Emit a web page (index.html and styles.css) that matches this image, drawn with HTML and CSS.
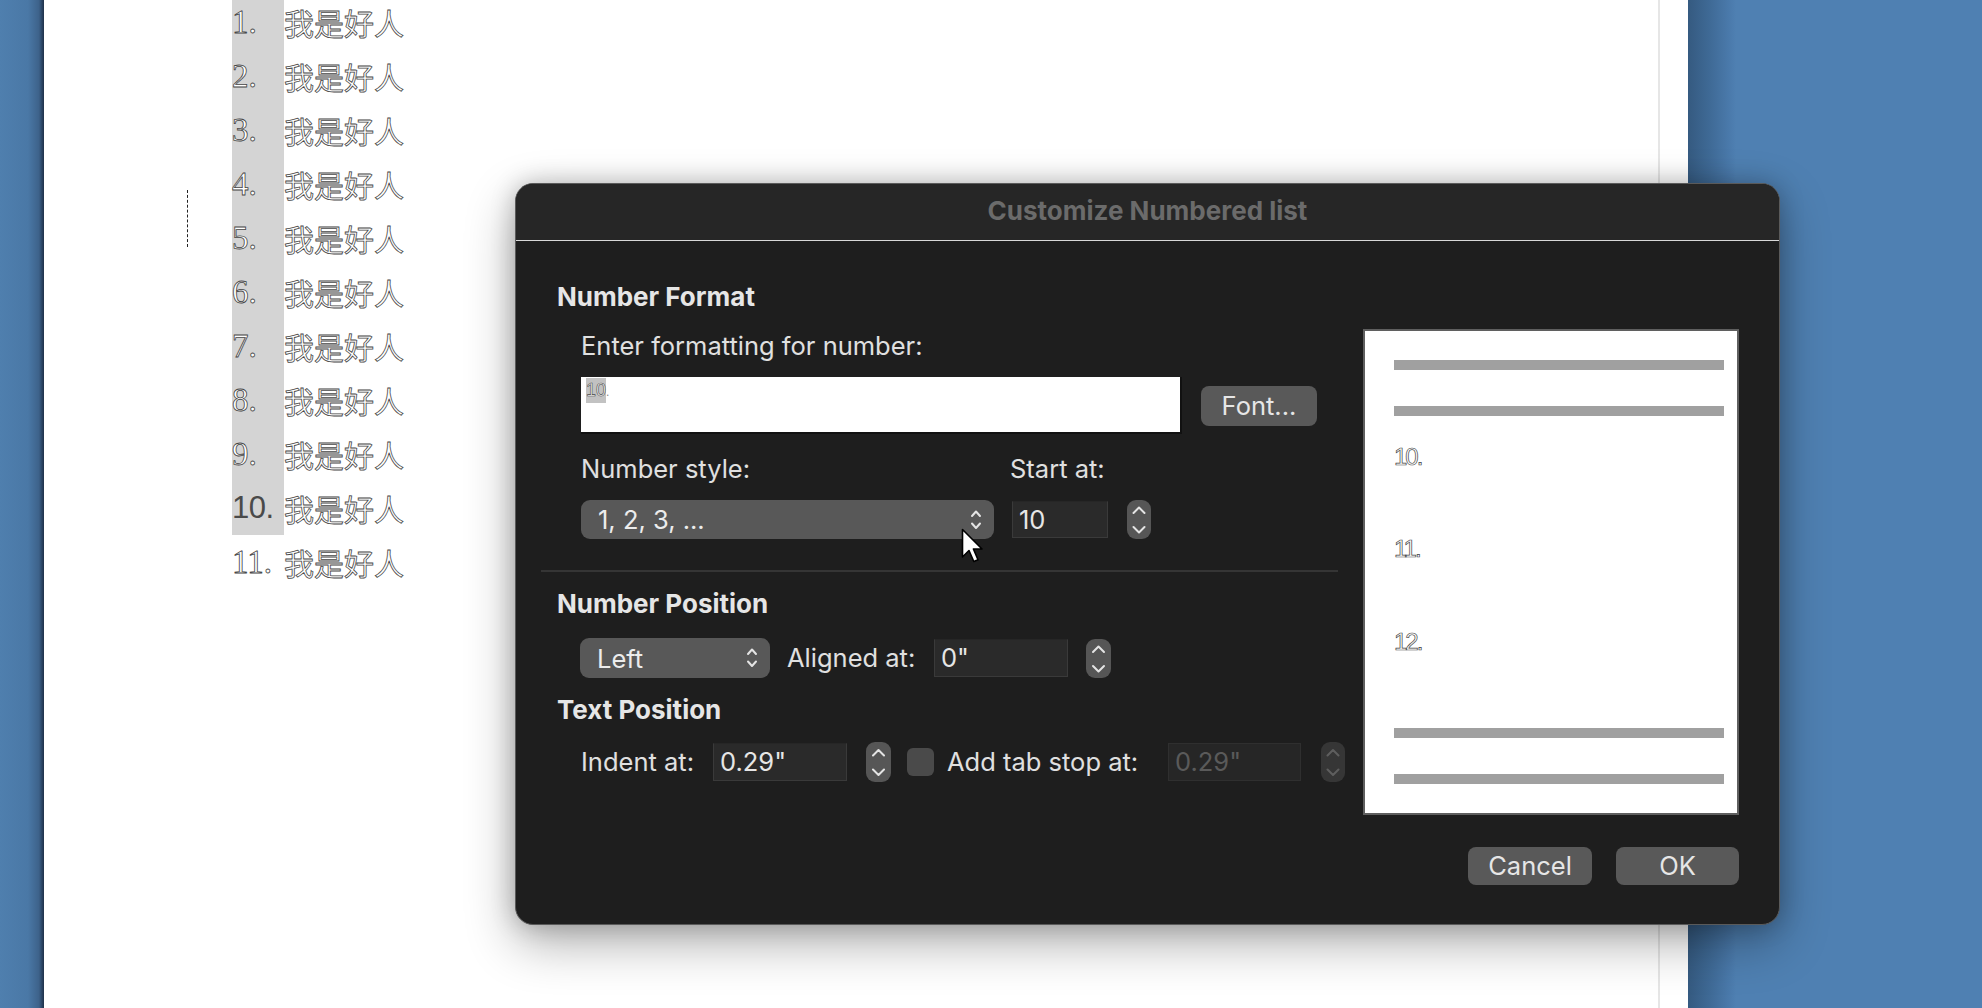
FILE: index.html
```html
<!DOCTYPE html>
<html lang="zh">
<head>
<meta charset="utf-8">
<title>Customize Numbered list</title>
<link rel="stylesheet" href="styles.css">
</head>
<body>
<div class="desktop">
  <div class="dock-edge"></div>
  <main class="page">
    <div class="page-body">
      <ol class="doc-list">
        <li class="doc-item"><span class="num hl">1.</span><span class="txt">我是好人</span></li>
        <li class="doc-item"><span class="num hl">2.</span><span class="txt">我是好人</span></li>
        <li class="doc-item"><span class="num hl">3.</span><span class="txt">我是好人</span></li>
        <li class="doc-item"><span class="num hl">4.</span><span class="txt">我是好人</span></li>
        <li class="doc-item"><span class="num hl">5.</span><span class="txt">我是好人</span></li>
        <li class="doc-item"><span class="num hl">6.</span><span class="txt">我是好人</span></li>
        <li class="doc-item"><span class="num hl">7.</span><span class="txt">我是好人</span></li>
        <li class="doc-item"><span class="num hl">8.</span><span class="txt">我是好人</span></li>
        <li class="doc-item"><span class="num hl">9.</span><span class="txt">我是好人</span></li>
        <li class="doc-item"><span class="num hl sel">10.</span><span class="txt">我是好人</span></li>
        <li class="doc-item"><span class="num">11.</span><span class="txt">我是好人</span></li>
      </ol>
      <span class="ibeam"></span>
    </div>
    <div class="page-margin"></div>
  </main>
  <div class="desk-right"></div>
</div>

<section class="dialog">
  <header class="dlg-title">Customize Numbered list</header>
  <div class="dlg-body">
    <div class="dlg-main">
      <h2 class="sec-h">Number Format</h2>
      <div class="lbl ind first-lbl">Enter formatting for number:</div>
      <div class="row fmt-row">
        <div class="fmt-field"><span class="fmt-sel">10</span><span class="fmt-dot">.</span></div>
        <div class="btn font-btn">Font...</div>
      </div>
      <div class="row lbl-row">
        <span class="lbl style-lbl">Number style:</span>
        <span class="lbl">Start at:</span>
      </div>
      <div class="row ctl-row">
        <div class="popup style-pop"><span>1, 2, 3, ...</span>
          <svg class="updown" width="14" height="24" viewBox="0 0 14 24"><path d="M3 8 L7 3.5 L11 8 M3 15.5 L7 20 L11 15.5"/></svg>
        </div>
        <div class="field start-field">10</div>
        <div class="stepper st-a">
          <svg width="24" height="39" viewBox="0 0 24 39"><path d="M6.5 13 L12 7.5 L17.5 13 M6.5 27 L12 32.5 L17.5 27"/></svg>
        </div>
      </div>
      <div class="sep"></div>
      <h2 class="sec-h sec-2">Number Position</h2>
      <div class="row pos-row">
        <div class="popup left-pop"><span>Left</span>
          <svg class="updown" width="14" height="24" viewBox="0 0 14 24"><path d="M3 8 L7 3.5 L11 8 M3 15.5 L7 20 L11 15.5"/></svg>
        </div>
        <span class="lbl aligned-lbl">Aligned at:</span>
        <div class="field num-field">0"</div>
        <div class="stepper st-b">
          <svg width="25" height="39" viewBox="0 0 25 39"><path d="M7 13 L12.5 7.5 L18 13 M7 27 L12.5 32.5 L18 27"/></svg>
        </div>
      </div>
      <h2 class="sec-h sec-3">Text Position</h2>
      <div class="row indent-row">
        <span class="lbl indent-lbl">Indent at:</span>
        <div class="field num-field">0.29"</div>
        <div class="stepper st-c">
          <svg width="25" height="40" viewBox="0 0 25 40"><path d="M7 13.5 L12.5 8 L18 13.5 M7 27.5 L12.5 33 L18 27.5"/></svg>
        </div>
        <span class="checkbox"></span>
        <span class="lbl tab-lbl">Add tab stop at:</span>
        <div class="field num-field off">0.29"</div>
        <div class="stepper st-d off">
          <svg width="24" height="40" viewBox="0 0 24 40"><path d="M6.5 13.5 L12 8 L17.5 13.5 M6.5 27.5 L12 33 L17.5 27.5"/></svg>
        </div>
      </div>
    </div>
    <div class="dlg-side">
      <div class="preview">
        <div class="pbar"></div>
        <div class="pbar pbar-2"></div>
        <div class="pnum pn-1">10.</div>
        <div class="pnum pn-2">11.</div>
        <div class="pnum pn-3">12.</div>
        <div class="pbar pbar-3"></div>
        <div class="pbar pbar-2"></div>
      </div>
      <div class="btn-row">
        <div class="btn push cancel">Cancel</div>
        <div class="btn push ok">OK</div>
      </div>
    </div>
  </div>
</section>

<svg class="pointer" width="26" height="38" viewBox="0 0 26 38">
  <path d="M1.5 1.5 L1.5 29 L8 22.5 L12.8 33.5 L17 31.7 L12.4 21 L21 21 Z" fill="#fff" stroke="#000" stroke-width="1.6" stroke-linejoin="round"/>
</svg>
</body>
</html>
```

FILE: styles.css
```css
html, body {
  margin: 0;
  padding: 0;
}
body {
  width: 1982px;
  height: 1008px;
  overflow: hidden;
  position: relative;
  background: #4f80b2;
  font-family: Inter, "Noto Sans", sans-serif;
}

/* ---------- desktop / document ---------- */
.desktop {
  display: flex;
  height: 1008px;
}
.dock-edge {
  flex: 0 0 44px;
  background: linear-gradient(to right, #4f7fae 0, #4a78a6 28px, #3d628a 39px, #2a4463 42px, #1f3149 44px);
}
.page {
  flex: 0 0 1644px;
  display: flex;
  background: #fff;
}
.page-body {
  flex: 0 0 1614px;
  border-right: 2px solid #e6e6e6;
  position: relative;
  overflow: hidden;
}
.page-margin {
  flex: 1;
}
.desk-right {
  flex: 1;
  background: linear-gradient(to right, #355a80 0, #3f6a96 22px, #4c7cae 44px, #4f80b2 48px);
}

.doc-list {
  list-style: none;
  margin: -5px 0 0 188px;
  padding: 0;
}
.doc-item {
  display: flex;
  height: 54px;
  line-height: 54px;
  font-size: 30px;
}
.num {
  flex: 0 0 52px;
  font-family: "Liberation Serif", serif;
  font-size: 33px;
  color: #fff;
  -webkit-text-stroke: 0.8px #444;
}
.num.hl {
  background: #d4d4d4;
}
.num.sel {
  color: #4a4a4a;
  -webkit-text-stroke: 0;
  font-family: "Liberation Sans", sans-serif;
  font-size: 31px;
  letter-spacing: -0.5px;
}
.txt {
  font-family: "Noto Sans CJK SC", sans-serif;
  font-weight: 400;
  color: #fff;
  -webkit-text-stroke: 0.8px #474747;
}
.ibeam {
  position: absolute;
  left: 143px;
  top: 190px;
  height: 57px;
  border-left: 1px dashed #222;
}

/* ---------- dialog ---------- */
.dialog {
  position: absolute;
  left: 515px;
  top: 183px;
  width: 1265px;
  height: 742px;
  box-sizing: border-box;
  border: 1px solid #5a5a5a;
  border-radius: 18px;
  background: #1e1e1e;
  overflow: hidden;
  box-shadow: 0 18px 50px rgba(0, 0, 0, 0.32), 0 0 24px rgba(0, 0, 0, 0.22);
  color: #e2e2e2;
}
.dlg-title {
  height: 56px;
  background: #262626;
  border-bottom: 1px solid #d9d9d9;
  text-align: center;
  line-height: 54px;
  font-size: 26px;
  font-weight: 700;
  color: #6b6b6b;
}
.dlg-body {
  display: flex;
}
.dlg-main {
  flex: 0 0 806px;
  padding: 41px 0 0 41px;
}
.dlg-side {
  flex: 0 0 376px;
  padding: 88px 40px 0 0;
}

.sec-h {
  margin: 0;
  font-size: 26px;
  line-height: 30px;
  font-weight: 700;
  color: #e6e6e6;
}
.lbl {
  font-size: 25.5px;
  line-height: 30px;
  color: #e0e0e0;
  white-space: nowrap;
}
.ind {
  margin-left: 24px;
}
.first-lbl {
  margin-top: 19px;
}
.row {
  display: flex;
  align-items: center;
}
.fmt-row {
  margin: 16px 0 0 24px;
}
.fmt-field {
  flex: 0 0 601px;
  height: 57px;
  box-sizing: border-box;
  background: #fff;
  border-right: 2px solid #111;
  border-bottom: 2px solid #111;
  padding: 1px 0 0 5px;
  font-family: "Liberation Sans", sans-serif;
  font-size: 18px;
  line-height: 25px;
}
.fmt-sel {
  display: inline-block;
  background: #c2c2c2;
  color: #fff;
  -webkit-text-stroke: 0.6px #444;
}
.fmt-dot {
  color: #888;
  font-size: 12px;
}
.btn {
  box-sizing: border-box;
  background: #595959;
  border-radius: 8px;
  color: #e6e6e6;
  font-size: 25.5px;
  text-align: center;
}
.font-btn {
  margin-left: 19px;
  width: 116px;
  height: 40px;
  line-height: 40px;
}
.lbl-row {
  margin: 20px 0 0 24px;
}
.style-lbl {
  flex: 0 0 429px;
}
.ctl-row {
  margin: 16px 0 0 24px;
}
.popup {
  box-sizing: border-box;
  display: flex;
  align-items: center;
  justify-content: space-between;
  background: #585858;
  border-radius: 9px;
  padding: 0 11px 0 17px;
  font-size: 25.5px;
  color: #ececec;
}
.updown path,
.stepper path {
  fill: none;
  stroke: #e4e4e4;
  stroke-width: 2;
  stroke-linecap: round;
  stroke-linejoin: round;
}
.style-pop {
  flex: 0 0 413px;
  height: 39px;
}
.field {
  box-sizing: border-box;
  height: 38px;
  background: #2a2a2a;
  border: 1px solid #3a3a3a;
  border-top-color: #262626;
  padding-left: 6px;
  font-size: 25.5px;
  line-height: 36px;
  color: #e6e6e6;
}
.start-field {
  flex: 0 0 96px;
  height: 37px;
  line-height: 35px;
  margin-left: 18px;
}
.stepper {
  box-sizing: border-box;
  background: #565656;
  border-radius: 9px;
  display: flex;
}
.st-a {
  margin-left: 19px;
  flex: 0 0 24px;
  height: 39px;
}
.sep {
  margin: 31px 0 0 -16px;
  width: 797px;
  height: 2px;
  background: #353535;
}
.sec-2 {
  margin-top: 17px;
}
.pos-row {
  margin: 19px 0 0 23px;
}
.left-pop {
  flex: 0 0 190px;
  height: 40px;
}
.aligned-lbl {
  flex: 0 0 147px;
  margin-left: 17px;
}
.num-field {
  flex: 0 0 134px;
}
.st-b {
  margin-left: 18px;
  flex: 0 0 25px;
  height: 39px;
}
.sec-3 {
  margin-top: 17px;
}
.indent-row {
  margin: 17px 0 0 24px;
  height: 40px;
}
.indent-lbl {
  flex: 0 0 132px;
}
.st-c {
  margin-left: 19px;
  flex: 0 0 25px;
  height: 40px;
}
.checkbox {
  margin-left: 16px;
  flex: 0 0 27px;
  height: 28px;
  border-radius: 6px;
  background: #4a4a4a;
}
.tab-lbl {
  flex: 0 0 221px;
  margin-left: 13px;
}
.num-field.off {
  flex: 0 0 133px;
  color: #5a5a5a;
  background: #262626;
  border-color: #2f2f2f;
}
.st-d {
  margin-left: 20px;
  flex: 0 0 24px;
  height: 40px;
}
.stepper.off {
  background: #363636;
}
.stepper.off path {
  stroke: #5e5e5e;
}

/* ---------- preview ---------- */
.preview {
  box-sizing: border-box;
  width: 376px;
  height: 486px;
  background: #fff;
  border: 2px solid #5f5f5f;
  padding: 29px 13px 0 29px;
}
.pbar {
  height: 10px;
  background: #a0a0a0;
}
.pbar-2 {
  margin-top: 36px;
}
.pbar-3 {
  margin-top: 72px;
}
.pnum {
  font-family: "Liberation Sans", sans-serif;
  font-size: 24px;
  line-height: 28px;
  letter-spacing: -2px;
  color: #fff;
  -webkit-text-stroke: 0.7px #444;
}
.pn-1 {
  margin-top: 27px;
}
.pn-2 {
  margin-top: 64px;
}
.pn-3 {
  margin-top: 65px;
}
.btn-row {
  display: flex;
  justify-content: flex-end;
  gap: 24px;
  margin-top: 32px;
}
.push {
  height: 38px;
  line-height: 38px;
}
.cancel {
  width: 124px;
}
.ok {
  width: 123px;
}

/* ---------- mouse pointer ---------- */
.pointer {
  position: absolute;
  left: 961px;
  top: 528px;
}
```
